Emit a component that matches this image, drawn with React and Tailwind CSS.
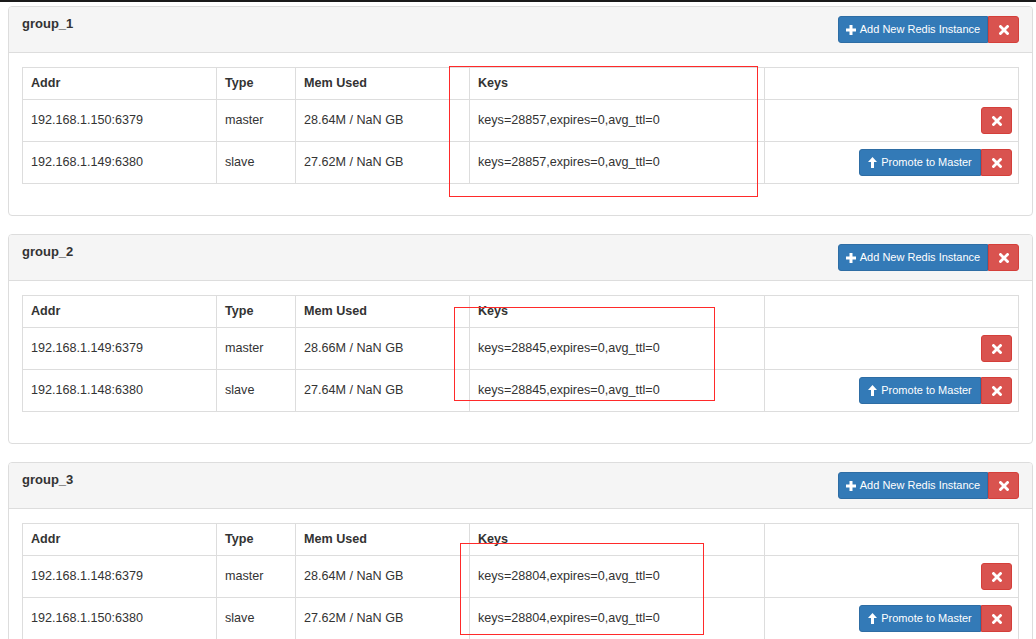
import React from "react";

const groups = [
  {
    name: "group_1",
    rows: [
      ["192.168.1.150:6379", "master", "28.64M / NaN GB", "keys=28857,expires=0,avg_ttl=0"],
      ["192.168.1.149:6380", "slave", "27.62M / NaN GB", "keys=28857,expires=0,avg_ttl=0"],
    ],
  },
  {
    name: "group_2",
    rows: [
      ["192.168.1.149:6379", "master", "28.66M / NaN GB", "keys=28845,expires=0,avg_ttl=0"],
      ["192.168.1.148:6380", "slave", "27.64M / NaN GB", "keys=28845,expires=0,avg_ttl=0"],
    ],
  },
  {
    name: "group_3",
    rows: [
      ["192.168.1.148:6379", "master", "28.64M / NaN GB", "keys=28804,expires=0,avg_ttl=0"],
      ["192.168.1.150:6380", "slave", "27.62M / NaN GB", "keys=28804,expires=0,avg_ttl=0"],
    ],
  },
];

const colW = ["w-[193px]", "w-[79px]", "w-[174px]", "w-[295px]", "w-[254px]"];

function PlusIcon() {
  return (
    <svg width="10" height="10" viewBox="0 0 10 10" className="shrink-0">
      <rect x="3.5" y="0" width="3" height="10" fill="white" />
      <rect x="0" y="3.5" width="10" height="3" fill="white" />
    </svg>
  );
}

function RemoveIcon() {
  return (
    <svg width="10" height="10" viewBox="0 0 10 10">
      <path d="M1.5 1.5 L8.5 8.5 M8.5 1.5 L1.5 8.5" stroke="white" strokeWidth="2.8" strokeLinecap="square" />
    </svg>
  );
}

function ArrowUpIcon() {
  return (
    <svg width="9" height="11" viewBox="0 0 9 11" className="shrink-0">
      <path d="M4.5 0 L9 5 L6 5 L6 11 L3 11 L3 5 L0 5 Z" fill="white" />
    </svg>
  );
}

function BlueBtn({ w, icon, label }) {
  return (
    <button className={`${w} h-[27px] flex items-center justify-center gap-[4px] bg-[#337ab7] border border-[#2e6da4] rounded-l-[3px] text-white text-[11px] leading-none`}>
      {icon}
      <span>{label}</span>
    </button>
  );
}

function RedBtn({ solo }) {
  return (
    <button
      className={`w-[31px] h-[27px] flex items-center justify-center bg-[#d9534f] border border-[#d43f3a] ${
        solo ? "rounded-[3px]" : "rounded-r-[3px]"
      }`}
    >
      <RemoveIcon />
    </button>
  );
}

function Cell({ i, bold, children }) {
  return (
    <div
      className={`${colW[i]} shrink-0 h-full flex items-center px-[8px] whitespace-nowrap ${
        i > 0 ? "border-l border-[#dddddd]" : ""
      } ${bold ? "font-bold" : ""}`}
    >
      {children}
    </div>
  );
}

function Panel({ g }) {
  return (
    <div className="w-[1025px] border border-[#dddddd] rounded-[4px] bg-white mb-[18px]">
      <div className="h-[46px] bg-[#f5f5f5] border-b border-[#dddddd] rounded-t-[3px] px-[13px] flex items-start justify-between">
        <div className="pt-[7px] text-[13px] leading-[20px] font-bold text-[#333333]">{g.name}</div>
        <div className="flex pt-[9px]">
          <BlueBtn w="w-[150px]" icon={<PlusIcon />} label="Add New Redis Instance" />
          <RedBtn />
        </div>
      </div>
      <div className="pt-[14px] px-[13px] pb-[31px]">
        <div className="w-[997px] border border-[#dddddd] text-[12.6px] text-[#333333]">
          <div className="h-[31px] flex">
            {["Addr", "Type", "Mem Used", "Keys", ""].map((h, i) => (
              <Cell key={i} i={i} bold>
                {h}
              </Cell>
            ))}
          </div>
          {g.rows.map((r, ri) => (
            <div key={ri} className="h-[42px] flex border-t border-[#dddddd]">
              {r.map((c, ci) => (
                <Cell key={ci} i={ci}>
                  {c}
                </Cell>
              ))}
              <div className={`${colW[4]} shrink-0 h-full flex items-center justify-end pr-[6px] border-l border-[#dddddd]`}>
                {r[1] === "master" ? (
                  <RedBtn solo />
                ) : (
                  <>
                    <BlueBtn w="w-[122px]" icon={<ArrowUpIcon />} label="Promote to Master" />
                    <RedBtn />
                  </>
                )}
              </div>
            </div>
          ))}
        </div>
      </div>
    </div>
  );
}

export default function App() {
  return (
    <div
      className="relative w-[1036px] h-[639px] overflow-hidden bg-white"
      style={{ fontFamily: '"Liberation Sans", Arial, sans-serif' }}
    >
      <div className="h-[2px] bg-[#1a1a1a]" />
      <div className="pt-[4px] pl-[8px]">
        {groups.map((g) => (
          <Panel key={g.name} g={g} />
        ))}
      </div>
      <div className="absolute left-[449px] top-[66px] w-[309px] h-[131px] border border-[#ff2a2a]" />
      <div className="absolute left-[454px] top-[307px] w-[261px] h-[94px] border border-[#ff2a2a]" />
      <div className="absolute left-[460px] top-[543px] w-[244px] h-[92px] border border-[#ff2a2a]" />
    </div>
  );
}
